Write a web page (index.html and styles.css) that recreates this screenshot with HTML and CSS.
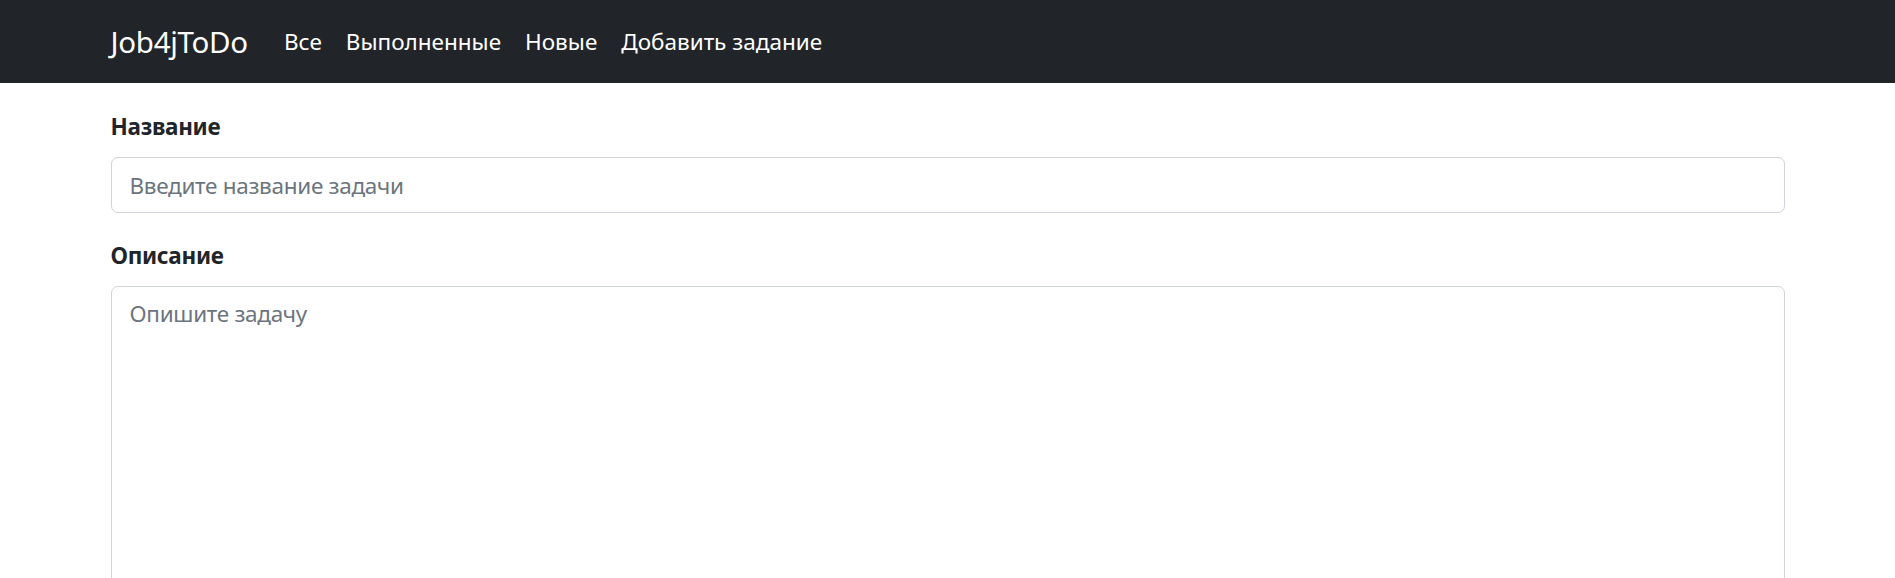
FILE: index.html
```html
<!DOCTYPE html>
<html lang="ru">
<head>
<meta charset="utf-8">
<title>Job4jToDo</title>
<link rel="stylesheet" href="styles.css">
</head>
<body>
<nav class="navbar">
  <div class="container nav-inner">
    <a class="brand" href="#">Job4jToDo</a>
    <ul class="nav-links">
      <li><a class="nav-link" href="#">Все</a></li>
      <li><a class="nav-link" href="#">Выполненные</a></li>
      <li><a class="nav-link" href="#">Новые</a></li>
      <li><a class="nav-link" href="#">Добавить задание</a></li>
    </ul>
  </div>
</nav>
<main class="container content">
  <form class="task-form">
    <div class="field">
      <label class="form-label" for="title">Название</label>
      <input class="form-control" id="title" type="text" placeholder="Введите название задачи">
    </div>
    <div class="field">
      <label class="form-label" for="desc">Описание</label>
      <textarea class="form-control textarea" id="desc" placeholder="Опишите задачу"></textarea>
    </div>
  </form>
</main>
</body>
</html>
```
FILE: styles.css
```css
html {
  overflow: hidden;
}
body {
  margin: 0;
  font-family: "Noto Sans", "Open Sans", sans-serif;
  font-size: 22.5px;
  letter-spacing: -0.3px;
  line-height: 36px;
  color: #212529;
  background: #fff;
}
.container {
  max-width: 1710px;
  margin: 0 auto;
  padding: 0 18px;
  box-sizing: border-box;
}
.navbar {
  background: #212529;
  height: 83px;
  display: flex;
  align-items: center;
}
.nav-inner {
  width: 100%;
  display: flex;
  align-items: center;
}
.brand {
  color: #fff;
  text-decoration: none;
  font-size: 29.5px;
  line-height: 45px;
  margin-right: 24px;
}
.nav-links {
  list-style: none;
  margin: 0;
  padding: 0;
  display: flex;
}
.nav-link {
  display: block;
  color: #fff;
  text-decoration: none;
  letter-spacing: 0;
  padding: 12px 12px;
}
.content {
  padding-top: 26px;
}
.field {
  margin-bottom: 25px;
}
.form-label {
  display: block;
  font-weight: 700;
  margin-bottom: 12px;
}
.form-control {
  display: block;
  width: 100%;
  box-sizing: border-box;
  font-family: inherit;
  font-size: 22.5px;
  letter-spacing: -0.3px;
  line-height: 36px;
  color: #212529;
  padding: 9px 18px;
  border: 1px solid #ced4da;
  border-radius: 7px;
  background: #fff;
  height: 56px;
  outline: none;
}
.form-control::placeholder {
  color: #6c757d;
}
.textarea {
  height: 330px;
  resize: none;
}
```
